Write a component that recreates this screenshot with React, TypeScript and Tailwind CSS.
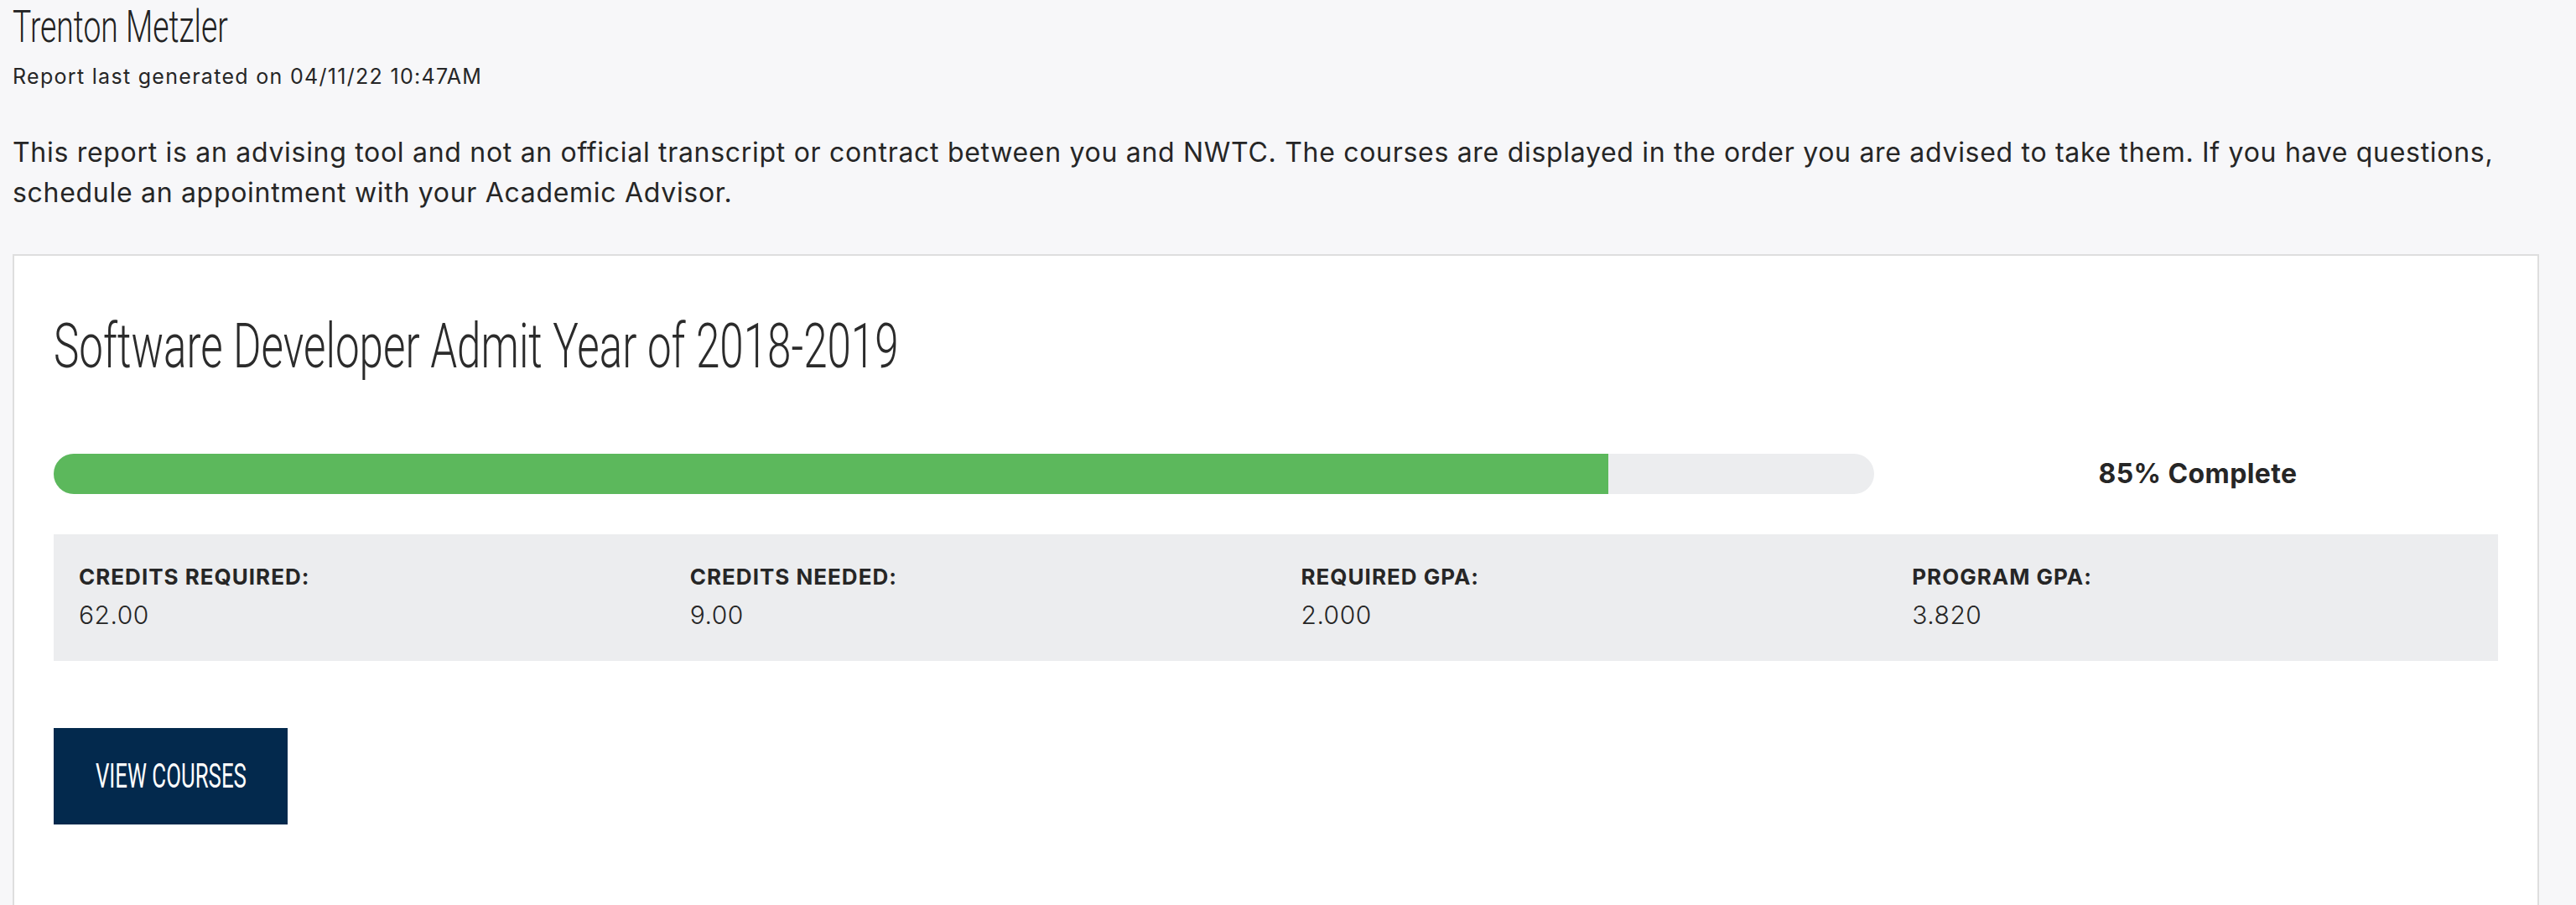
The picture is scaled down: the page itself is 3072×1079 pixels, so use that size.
const narrow = { fontFamily: '"Roboto", "Liberation Sans", sans-serif' };

const stats = [
  { label: "CREDITS REQUIRED:", value: "62.00" },
  { label: "CREDITS NEEDED:", value: "9.00" },
  { label: "REQUIRED GPA:", value: "2.000" },
  { label: "PROGRAM GPA:", value: "3.820" },
];

export default function App() {
  const percent = 85.4;

  return (
    <div className="min-h-screen bg-[#f7f7f9] text-[#262626] font-['Inter',sans-serif] pl-[15px] pr-[44px] overflow-hidden">
      <h1 className="text-[54px] font-light leading-[64px] text-[#222] whitespace-nowrap" style={narrow}>
        <span className="inline-block origin-left scale-x-[0.69]">Trenton Metzler</span>
      </h1>
      <p className="text-[25px] leading-[32px] mt-[11px] tracking-[1.3px]">
        Report last generated on 04/11/22 10:47AM
      </p>

      <p className="text-[32px] leading-[48px] mt-[51px] tracking-[0.7px]">
        This report is an advising tool and not an official transcript or contract between you and NWTC. The courses are
        displayed in the order you are advised to take them. If you have questions,
        <br />
        schedule an appointment with your Academic Advisor.
      </p>

      <section className="mt-[49px] bg-white border-2 border-[#dedede] px-[47px] pt-[63px] pb-[120px]">
        <h2 className="text-[75px] font-light leading-[88px] text-[#2b2b2b] whitespace-nowrap" style={narrow}>
          <span className="inline-block origin-left scale-x-[0.682]">Software Developer Admit Year of 2018-2019</span>
        </h2>

        <div className="mt-[85px] flex items-center">
          <div className="w-[2171px] h-[48px] rounded-full bg-[#ecedef] overflow-hidden">
            <div className="h-full bg-[#5cb85c]" style={{ width: `${percent}%` }} />
          </div>
          <div className="flex-1 pl-[28px] text-center text-[32px] font-bold tracking-[0.4px]">85% Complete</div>
        </div>

        <div className="mt-[48px] bg-[#ecedef] grid grid-cols-4 h-[151px] pt-[35px]">
          {stats.map((s) => (
            <div key={s.label} className="px-[30px]">
              <div className="text-[26px] font-bold leading-[32px] tracking-[1px]">{s.label}</div>
              <div className="text-[30px] font-light leading-[40px] mt-[9px] tracking-[0.5px]">{s.value}</div>
            </div>
          ))}
        </div>

        <button className="mt-[80px] w-[279px] h-[115px] bg-[#03294d] text-white flex items-center justify-center">
          <span className="inline-block whitespace-nowrap text-[41px] leading-none scale-x-[0.63]" style={narrow}>
            VIEW COURSES
          </span>
        </button>
      </section>
    </div>
  );
}
